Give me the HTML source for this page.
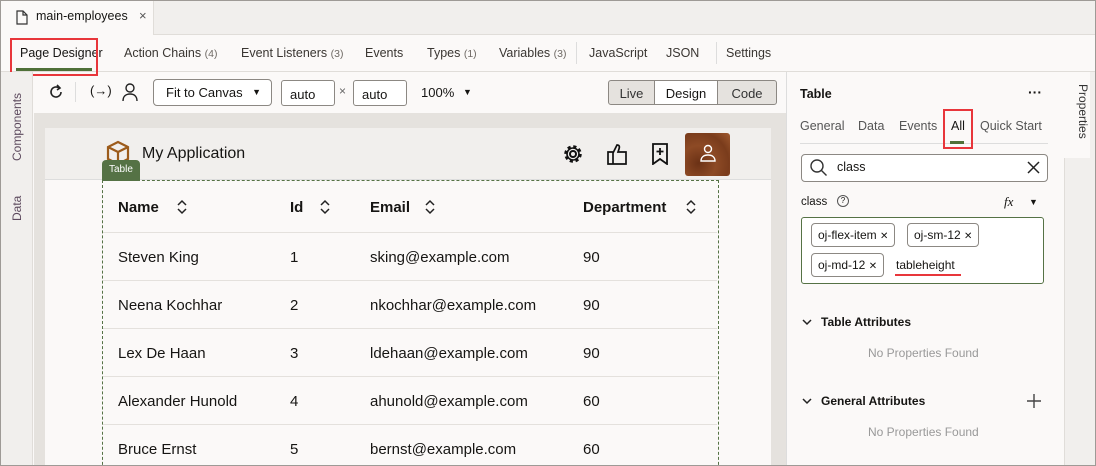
<!DOCTYPE html>
<html><head><meta charset="utf-8"><style>
*{box-sizing:border-box;margin:0;padding:0}
html,body{width:1096px;height:466px;overflow:hidden}
body{font-family:"Liberation Sans",sans-serif;color:#161513;background:#fbf9f8}
#w{position:relative;width:1096px;height:466px;overflow:hidden}
.a{position:absolute;white-space:nowrap}
.nav{font-size:12.5px;color:#3a3632;top:46px}
.cnt{color:#6f6a65;font-size:10.5px}
.td{font-size:15px;color:#161513}
.hline{position:absolute;left:103px;width:614px;height:1px;background:#e4e1dd}
.chip{position:absolute;height:24px;border:1px solid #8c8883;border-radius:4px;font-size:12px;padding:4px 6px;background:#fff}
</style></head><body><div id="w">
<div class="a" style="left:0;top:0;width:1096px;height:35px;background:#f1efed;border-bottom:1px solid #e0ddd9"></div>
<div class="a" style="left:1px;top:1px;width:153px;height:34px;background:#fbf9f8;border-right:1px solid #e0ddd9"></div>
<svg class="a" style="left:16px;top:10px" width="12" height="15" viewBox="0 0 12 15"><path d="M1 1h6l4 4v9H1z M7 1v4h4" fill="none" stroke="#333" stroke-width="1.2"/></svg>
<div class="a" style="left:36px;top:9px;font-size:12.5px">main-employees</div>
<div class="a" style="left:139px;top:8px;font-size:13px;color:#555">×</div>
<div class="a" style="left:0;top:71px;width:1096px;height:1px;background:#e0ddd9"></div>
<div class="a nav" style="left:20px;color:#161513">Page Designer</div>
<div class="a" style="left:16px;top:68px;width:76px;height:3px;background:#4f7038"></div>
<div class="a" style="left:10px;top:38px;width:88px;height:38px;border:2px solid #e8363b"></div>
<div class="a nav" style="left:124px">Action Chains <span class="cnt">(4)</span></div>
<div class="a nav" style="left:241px">Event Listeners <span class="cnt">(3)</span></div>
<div class="a nav" style="left:365px">Events</div>
<div class="a nav" style="left:427px">Types <span class="cnt">(1)</span></div>
<div class="a nav" style="left:499px">Variables <span class="cnt">(3)</span></div>
<div class="a" style="left:576px;top:42px;width:1px;height:22px;background:#ddd"></div>
<div class="a nav" style="left:589px">JavaScript</div>
<div class="a nav" style="left:666px">JSON</div>
<div class="a" style="left:716px;top:42px;width:1px;height:22px;background:#ddd"></div>
<div class="a nav" style="left:726px">Settings</div>
<div class="a" style="left:1px;top:72px;width:32px;height:394px;background:#f1efed;border-right:1px solid #e0ddd9"></div>
<div class="a" style="font-size:12px;color:#5d4a5e;left:10px;top:161px;transform:rotate(-90deg);transform-origin:0 0">Components</div>
<div class="a" style="left:10px;top:221px;transform:rotate(-90deg);transform-origin:0 0;font-size:12px;color:#5d4a5e">Data</div>
<svg class="a" style="left:48px;top:84px" width="16" height="16" viewBox="0 0 16 16"><path d="M13 8a5 5 0 1 1-2-4" fill="none" stroke="#222" stroke-width="1.6"/><path d="M9 1l3 3-3 2" fill="none" stroke="#222" stroke-width="1.6"/></svg>
<div class="a" style="left:75px;top:82px;width:1px;height:20px;background:#ddd"></div>
<div class="a" style="left:90px;top:83px;font-size:13px">(→)</div>
<svg class="a" style="left:121px;top:82px" width="18" height="20" viewBox="0 0 18 20"><circle cx="9" cy="6" r="4" fill="none" stroke="#222" stroke-width="1.4"/><path d="M2 19c0-5 3-7 7-7s7 2 7 7" fill="none" stroke="#222" stroke-width="1.4"/></svg>
<div class="a" style="left:153px;top:79px;width:119px;height:27px;border:1px solid #8c8883;border-radius:4px;background:#fff;font-size:13px;padding:5px 12px">Fit to Canvas <span style="position:absolute;right:10px;top:7px;font-size:9px">▼</span></div>
<div class="a" style="left:281px;top:80px;width:54px;height:26px;border:1px solid #8c8883;border-radius:3px;background:#fff;font-size:13px;padding:6px 8px">auto</div>
<div class="a" style="left:339px;top:84px;font-size:12px;color:#666">×</div>
<div class="a" style="left:353px;top:80px;width:54px;height:26px;border:1px solid #8c8883;border-radius:3px;background:#fff;font-size:13px;padding:6px 8px">auto</div>
<div class="a" style="left:421px;top:85px;font-size:13px">100%</div>
<div class="a" style="left:463px;top:87px;font-size:9px">▼</div>
<div class="a" style="left:608px;top:80px;width:169px;height:25px;border:1px solid #8c8883;border-radius:3px;background:#e5e2de;display:flex;font-size:13px">
<div style="width:45px;text-align:center;padding-top:5px;color:#333">Live</div>
<div style="width:64px;text-align:center;padding-top:5px;background:#fff;border-left:1px solid #8c8883;border-right:1px solid #8c8883">Design</div>
<div style="flex:1;text-align:center;padding-top:5px;color:#333">Code</div></div>
<div class="a" style="left:34px;top:113px;width:752px;height:353px;background:#e5e2de"></div>
<div class="a" style="left:45px;top:128px;width:726px;height:338px;background:#fbf9f8"></div>
<div class="a" style="left:45px;top:128px;width:726px;height:52px;background:#f1efed;border-bottom:1px solid #ddd"></div>
<svg class="a" style="left:105px;top:140px" width="26" height="26" viewBox="0 0 26 26"><path d="M13 2l10 5v12l-10 5-10-5V7z M3 7l10 5 10-5 M13 12v12" fill="none" stroke="#9c5b1b" stroke-width="2.2"/></svg>
<div class="a" style="left:142px;top:145px;font-size:16px">My Application</div>
<div class="a" style="left:102px;top:160px;width:38px;height:21px;background:#557245;color:#fff;font-size:10px;border-radius:4px 4px 0 0;padding:4px 0 0 7px">Table</div>
<svg class="a" style="left:562px;top:143px" width="22" height="22" viewBox="0 0 22 22"><circle cx="11" cy="11" r="3" fill="none" stroke="#111" stroke-width="2"/><circle cx="11" cy="11" r="7" fill="none" stroke="#111" stroke-width="3.5" stroke-dasharray="3 2.5"/><circle cx="11" cy="11" r="6" fill="none" stroke="#111" stroke-width="1.6"/></svg>
<svg class="a" style="left:606px;top:143px" width="24" height="22" viewBox="0 0 24 22"><path d="M2 9h5v12H2z M7 10l4-8c2 0 3 1 2 4l-1 3h8v12H7" fill="none" stroke="#111" stroke-width="1.7"/></svg>
<svg class="a" style="left:651px;top:143px" width="18" height="22" viewBox="0 0 18 22"><path d="M2 1h14v20l-7-5-7 5z M9 5v7 M5.5 8.5h7" fill="none" stroke="#111" stroke-width="1.8"/></svg>
<div class="a" style="left:685px;top:133px;width:45px;height:43px;border-radius:3px;background:radial-gradient(circle at 30% 70%,#6b3115,#8d4a25 40%,#7a3c1c 70%,#a05a30)"></div>
<svg class="a" style="left:699px;top:143px" width="18" height="20" viewBox="0 0 18 20"><circle cx="9" cy="6" r="3.5" fill="none" stroke="#fff" stroke-width="1.4"/><path d="M2 18c0-4 3-6 7-6s7 2 7 6z" fill="none" stroke="#fff" stroke-width="1.4"/></svg>
<div class="a" style="left:102px;top:180px;width:617px;height:300px;border:1px dashed #557245"></div>
<div class="a td" style="left:118px;top:199px;font-weight:bold">Name</div>
<div class="a td" style="left:290px;top:199px;font-weight:bold">Id</div>
<div class="a td" style="left:370px;top:199px;font-weight:bold">Email</div>
<div class="a td" style="left:583px;top:199px;font-weight:bold">Department</div>
<svg class="a" style="left:176px;top:199px" width="12" height="16" viewBox="0 0 12 16"><path d="M2 6l4-4 4 4M2 10l4 4 4-4" fill="none" stroke="#222" stroke-width="1.5"/></svg>
<svg class="a" style="left:319px;top:199px" width="12" height="16" viewBox="0 0 12 16"><path d="M2 6l4-4 4 4M2 10l4 4 4-4" fill="none" stroke="#222" stroke-width="1.5"/></svg>
<svg class="a" style="left:424px;top:199px" width="12" height="16" viewBox="0 0 12 16"><path d="M2 6l4-4 4 4M2 10l4 4 4-4" fill="none" stroke="#222" stroke-width="1.5"/></svg>
<svg class="a" style="left:685px;top:199px" width="12" height="16" viewBox="0 0 12 16"><path d="M2 6l4-4 4 4M2 10l4 4 4-4" fill="none" stroke="#222" stroke-width="1.5"/></svg>
<div class="hline" style="top:232px"></div><div class="hline" style="top:280px"></div><div class="hline" style="top:328px"></div><div class="hline" style="top:376px"></div><div class="hline" style="top:424px"></div>
<div class="a td" style="left:118px;top:249px">Steven King</div><div class="a td" style="left:290px;top:249px">1</div><div class="a td" style="left:370px;top:249px">sking@example.com</div><div class="a td" style="left:583px;top:249px">90</div>
<div class="a td" style="left:118px;top:297px">Neena Kochhar</div><div class="a td" style="left:290px;top:297px">2</div><div class="a td" style="left:370px;top:297px">nkochhar@example.com</div><div class="a td" style="left:583px;top:297px">90</div>
<div class="a td" style="left:118px;top:345px">Lex De Haan</div><div class="a td" style="left:290px;top:345px">3</div><div class="a td" style="left:370px;top:345px">ldehaan@example.com</div><div class="a td" style="left:583px;top:345px">90</div>
<div class="a td" style="left:118px;top:393px">Alexander Hunold</div><div class="a td" style="left:290px;top:393px">4</div><div class="a td" style="left:370px;top:393px">ahunold@example.com</div><div class="a td" style="left:583px;top:393px">60</div>
<div class="a td" style="left:118px;top:441px">Bruce Ernst</div><div class="a td" style="left:290px;top:441px">5</div><div class="a td" style="left:370px;top:441px">bernst@example.com</div><div class="a td" style="left:583px;top:441px">60</div>
<div class="a" style="left:786px;top:72px;width:278px;height:394px;background:#fbf9f8;border-left:1px solid #ddd"></div>
<div class="a" style="left:1064px;top:72px;width:32px;height:394px;background:#f1efed;border-left:1px solid #e0ddd9"></div>
<div class="a" style="left:1060px;top:72px;width:30px;height:86px;background:#fbf9f8"></div>
<div class="a" style="left:1090px;top:84px;transform:rotate(90deg);transform-origin:0 0;font-size:12px;color:#333">Properties</div>
<div class="a" style="left:800px;top:87px;font-size:12.5px;font-weight:bold">Table</div>
<div class="a" style="left:1028px;top:84px;font-size:14px;font-weight:bold">···</div>
<div class="a" style="left:800px;top:119px;font-size:12.5px;color:#555">General</div>
<div class="a" style="left:858px;top:119px;font-size:12.5px;color:#555">Data</div>
<div class="a" style="left:899px;top:119px;font-size:12.5px;color:#555">Events</div>
<div class="a" style="left:951px;top:119px;font-size:12.5px">All</div>
<div class="a" style="left:980px;top:119px;font-size:12.5px;color:#555">Quick Start</div>
<div class="a" style="left:800px;top:143px;width:248px;height:1px;background:#ddd"></div>
<div class="a" style="left:950px;top:141px;width:14px;height:3px;background:#4f7038"></div>
<div class="a" style="left:943px;top:109px;width:30px;height:40px;border:2px solid #e8363b"></div>
<div class="a" style="left:801px;top:154px;width:247px;height:28px;border:1px solid #8c8883;border-radius:4px;background:#fff"></div>
<svg class="a" style="left:809px;top:158px" width="20" height="20" viewBox="0 0 20 20"><circle cx="8" cy="8" r="6" fill="none" stroke="#333" stroke-width="1.4"/><path d="M12.5 12.5l5 5" stroke="#333" stroke-width="1.4"/></svg>
<div class="a" style="left:837px;top:160px;font-size:12.5px">class</div>
<svg class="a" style="left:1027px;top:161px" width="13" height="13" viewBox="0 0 13 13"><path d="M1 1l11 11M12 1L1 12" stroke="#222" stroke-width="1.5"/></svg>
<div class="a" style="left:801px;top:196px;font-size:11.5px">class</div>
<div class="a" style="left:837px;top:195px;width:12px;height:12px;border:1px solid #555;border-radius:50%;font-size:8px;text-align:center;line-height:10px">?</div>
<div class="a" style="left:1004px;top:194px;font-size:13px;font-style:italic;font-family:'Liberation Serif',serif">fx</div>
<div class="a" style="left:1029px;top:197px;font-size:9px">▼</div>
<div class="a" style="left:801px;top:217px;width:243px;height:67px;border:1px solid #557245;border-radius:3px;background:#fff"></div>
<div class="chip" style="left:811px;top:223px">oj-flex-item <span style="font-size:10px">✕</span></div>
<div class="chip" style="left:907px;top:223px">oj-sm-12 <span style="font-size:10px">✕</span></div>
<div class="chip" style="left:811px;top:253px">oj-md-12 <span style="font-size:10px">✕</span></div>
<div class="a" style="left:896px;top:258px;font-size:12px">tableheight</div>
<div class="a" style="left:895px;top:274px;width:66px;height:2px;background:#e8363b"></div>
<svg class="a" style="left:802px;top:318px" width="10" height="8" viewBox="0 0 10 8"><path d="M1 2l4 4 4-4" fill="none" stroke="#222" stroke-width="1.5"/></svg>
<div class="a" style="left:821px;top:315px;font-size:12px;font-weight:bold">Table Attributes</div>
<div class="a" style="left:868px;top:346px;font-size:12px;color:#999">No Properties Found</div>
<svg class="a" style="left:802px;top:397px" width="10" height="8" viewBox="0 0 10 8"><path d="M1 2l4 4 4-4" fill="none" stroke="#222" stroke-width="1.5"/></svg>
<div class="a" style="left:821px;top:394px;font-size:12px;font-weight:bold">General Attributes</div>
<svg class="a" style="left:1027px;top:394px" width="14" height="14" viewBox="0 0 14 14"><path d="M7 0v14M0 7h14" stroke="#444" stroke-width="1.4"/></svg>
<div class="a" style="left:868px;top:425px;font-size:12px;color:#999">No Properties Found</div>
<div class="a" style="left:0;top:0;width:1096px;height:466px;border:1px solid #9e9a96"></div>
</div></body></html>
